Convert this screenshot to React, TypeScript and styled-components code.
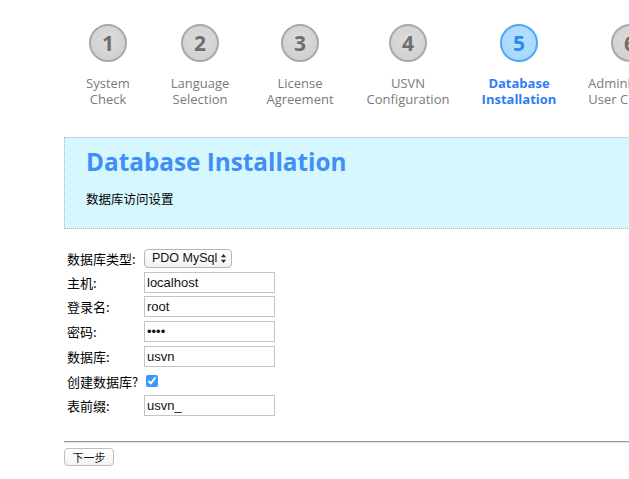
import React from "react";
import styled, { createGlobalStyle } from "styled-components";

const Global = createGlobalStyle`
  html, body { margin: 0; padding: 0; background: #fff; overflow: hidden; }
  body { font-family: "Open Sans", "Noto Sans CJK SC", sans-serif; color: #000; }
`;

const Page = styled.div`
  width: 720px;
  padding: 0 0 0 64px;
  box-sizing: border-box;
`;

const Steps = styled.ol`
  list-style: none;
  margin: 0;
  padding: 24px 0 0 0;
  display: flex;
  align-items: flex-start;
  height: 137px;
  box-sizing: border-box;
`;

const Step = styled.li<{ $w: number }>`
  width: ${(p) => p.$w}px;
  flex: none;
  display: flex;
  flex-direction: column;
  align-items: center;
`;

const Circle = styled.div<{ $active?: boolean }>`
  width: 38px;
  height: 38px;
  box-sizing: border-box;
  border-radius: 50%;
  border: 2px solid ${(p) => (p.$active ? "#4ea7f6" : "#a9a9a9")};
  background: ${(p) =>
    p.$active
      ? "radial-gradient(circle at 50% 40%, #b6e0fd 0%, #a3d6fb 100%)"
      : "radial-gradient(circle at 50% 40%, #dcdcdc 0%, #cdcdcd 100%)"};
  display: flex;
  align-items: center;
  justify-content: center;
  font-family: "Open Sans", sans-serif;
  font-weight: 700;
  font-size: 21px;
  color: ${(p) => (p.$active ? "#2b8bef" : "#6e6e6e")};
`;

const StepLabel = styled.div<{ $active?: boolean }>`
  margin-top: 13px;
  font-size: 13px;
  line-height: 16px;
  text-align: center;
  white-space: nowrap;
  font-weight: ${(p) => (p.$active ? 700 : 400)};
  color: ${(p) => (p.$active ? "#2f7df4" : "#7a7a7a")};
`;

const Banner = styled.div`
  background: #d5f7fd;
  border: 1px dotted #a8b8bc;
  padding: 9px 21px 0 21px;
  height: 92px;
  box-sizing: border-box;
`;

const Title = styled.h1`
  margin: 0;
  font-family: "Open Sans", sans-serif;
  font-weight: 700;
  font-size: 24.3px;
  line-height: 30px;
  color: #3f8ff6;
`;

const Sub = styled.p`
  margin: 13px 0 0 0;
  font-family: "Noto Sans CJK SC", sans-serif;
  font-size: 12.5px;
  line-height: 18px;
`;

const Form = styled.div`
  margin-top: 17px;
  padding-left: 3px;
  display: grid;
  grid-template-columns: 77px auto;
  grid-template-rows: 24px 24px 25px 25px 25px 24px 25px;
  align-items: center;
  font-family: "Liberation Sans", "Noto Sans CJK SC", sans-serif;
  font-size: 13px;
`;

const Label = styled.label`
  white-space: nowrap;
  font-family: "Noto Sans CJK SC", sans-serif;
  font-size: 13px;
`;

const Field = styled.div`
  display: flex;
  align-items: center;
`;

const TextInput = styled.input`
  width: 131px;
  height: 21px;
  box-sizing: border-box;
  border: 1px solid #c4c4c4;
  padding: 0 2px;
  margin: 0;
  font-family: "Liberation Sans", sans-serif;
  font-size: 13px;
  color: #111;
  background: #fff;
  outline: none;
`;

const Select = styled.div`
  width: 88px;
  height: 19px;
  box-sizing: border-box;
  border: 1px solid #b5b5b5;
  border-radius: 4px;
  background: linear-gradient(#ffffff, #f2f2f2);
  display: flex;
  align-items: center;
  justify-content: space-between;
  padding: 0 4px 0 7px;
  font-family: "Liberation Sans", sans-serif;
  font-size: 12.5px;
  white-space: nowrap;
  color: #111;
`;

const Check = styled.input`
  margin: 0 0 0 2px;
  width: 12px;
  height: 12px;
  accent-color: #3a97fb;
`;

const Rule = styled.div`
  margin-top: 23px;
  height: 1px;
  background: #9a9a9a;
  border-bottom: 1px solid #e0e0e0;
`;

const Button = styled.button`
  margin-top: 5px;
  width: 50px;
  height: 18px;
  box-sizing: border-box;
  border: 1px solid #bdbdbd;
  border-radius: 4px;
  background: linear-gradient(#ffffff, #f3f3f3);
  font-family: "Noto Sans CJK SC", sans-serif;
  font-size: 11px;
  line-height: 14px;
  padding: 0;
  color: #111;
`;

const steps = [
  { n: 1, l: ["System", "Check"], w: 88 },
  { n: 2, l: ["Language", "Selection"], w: 96 },
  { n: 3, l: ["License", "Agreement"], w: 104 },
  { n: 4, l: ["USVN", "Configuration"], w: 112 },
  { n: 5, l: ["Database", "Installation"], w: 110, active: true },
  { n: 6, l: ["Administrator", "User Creation"], w: 112 },
];

const Arrows = () => (
  <svg width="7" height="11" viewBox="0 0 7 11">
    <path d="M3.5 1 L6 4.3 H1 Z" fill="#222" />
    <path d="M3.5 10 L6 6.7 H1 Z" fill="#222" />
  </svg>
);

export default function App() {
  return (
    <Page>
      <Global />
      <Steps>
        {steps.map((s) => (
          <Step key={s.n} $w={s.w}>
            <Circle $active={s.active}>{s.n}</Circle>
            <StepLabel $active={s.active}>
              {s.l[0]}
              <br />
              {s.l[1]}
            </StepLabel>
          </Step>
        ))}
      </Steps>
      <Banner>
        <Title>Database Installation</Title>
        <Sub>数据库访问设置</Sub>
      </Banner>
      <Form>
        <Label>数据库类型:</Label>
        <Field>
          <Select>
            <span>PDO MySql</span>
            <Arrows />
          </Select>
        </Field>
        <Label>主机:</Label>
        <Field><TextInput readOnly value="localhost" /></Field>
        <Label>登录名:</Label>
        <Field><TextInput readOnly value="root" /></Field>
        <Label>密码:</Label>
        <Field><TextInput readOnly type="password" value="1234" /></Field>
        <Label>数据库:</Label>
        <Field><TextInput readOnly value="usvn" /></Field>
        <Label>创建数据库?</Label>
        <Field><Check type="checkbox" readOnly checked /></Field>
        <Label>表前缀:</Label>
        <Field><TextInput readOnly value="usvn_" /></Field>
      </Form>
      <Rule />
      <Button>下一步</Button>
    </Page>
  );
}
